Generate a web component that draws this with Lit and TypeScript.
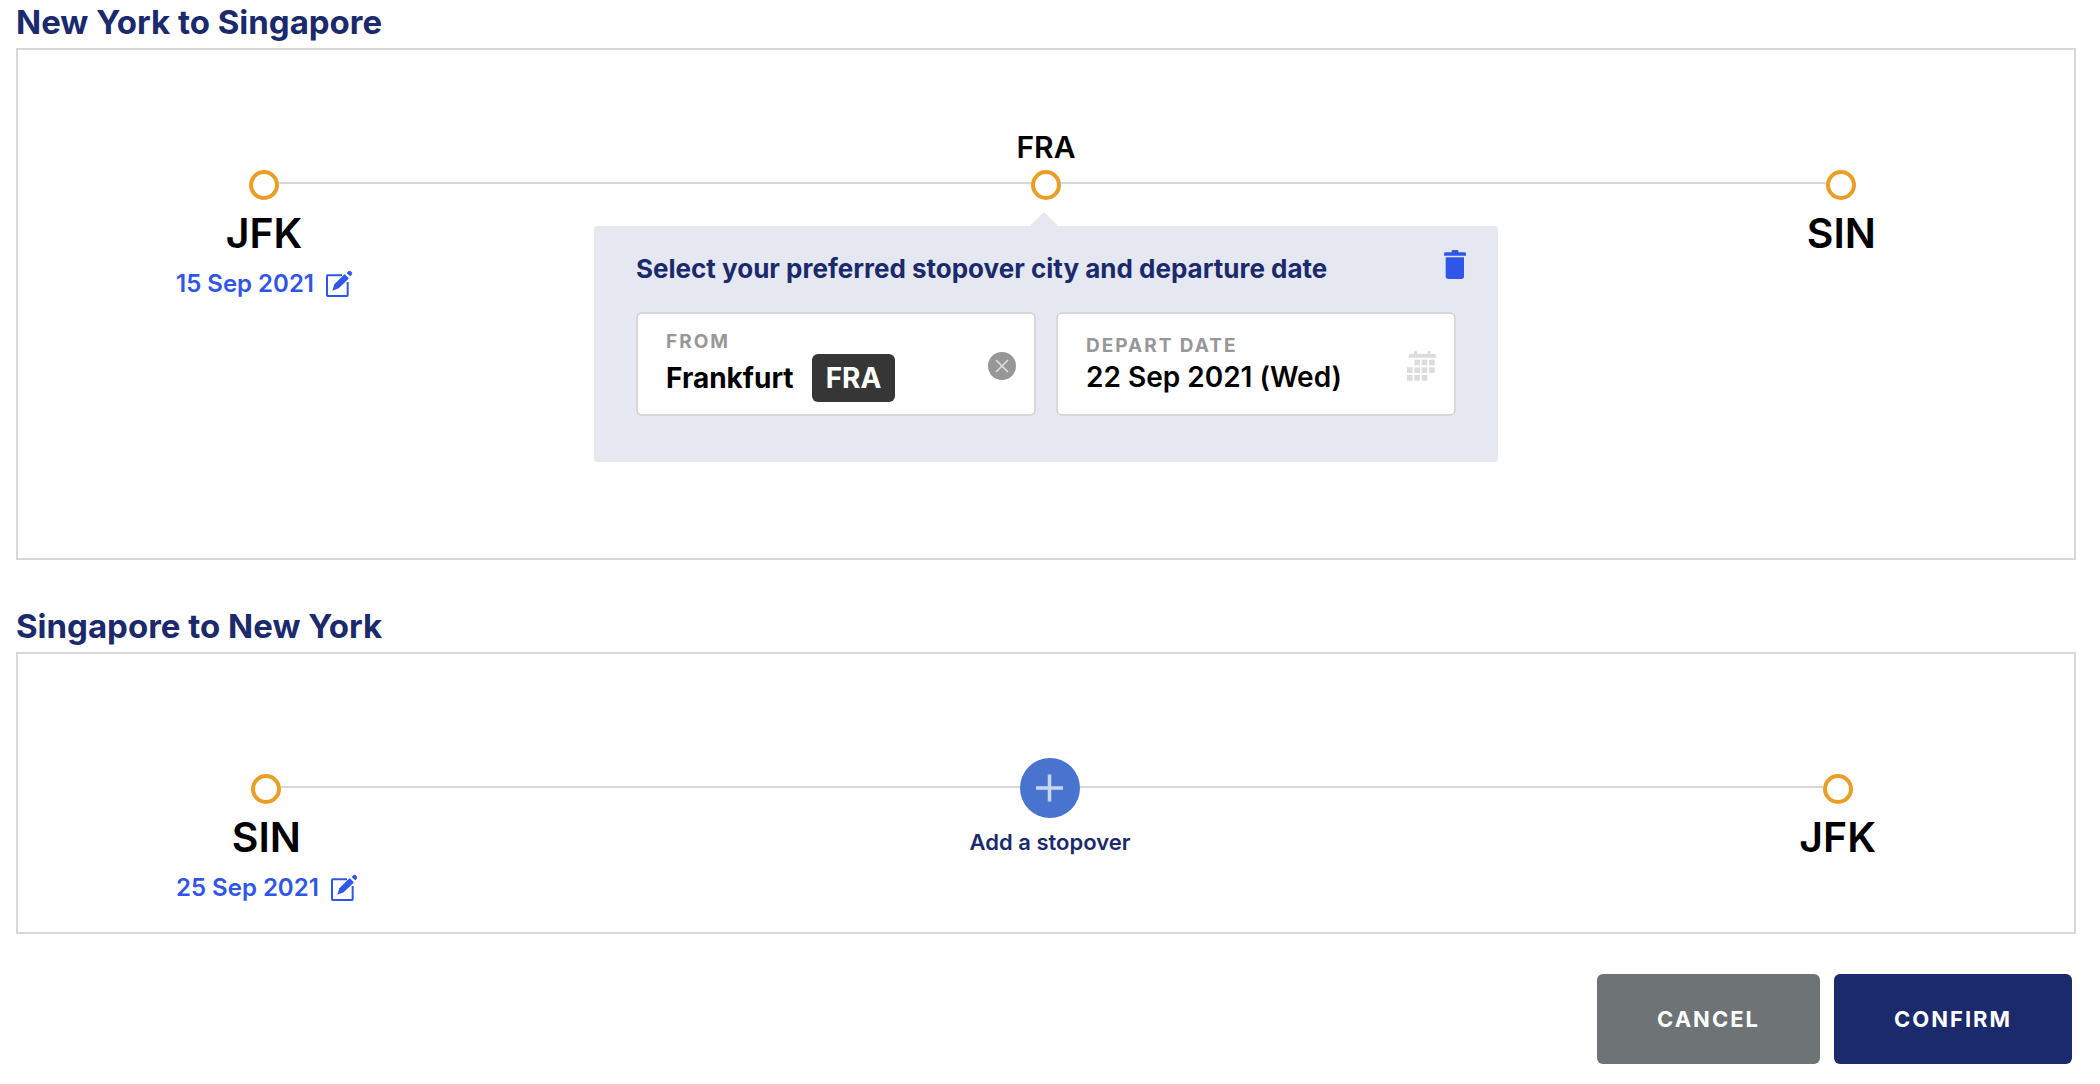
import { LitElement, html, css, svg, nothing } from "lit";
import { customElement, property } from "lit/decorators.js";

const editIcon = html`<svg class="edit-icon" viewBox="0 0 78 78" aria-hidden="true">
  ${svg`<path d="M48 13H5Q3 13 3 15V73Q3 75 5 75H63Q65 75 65 73V33" fill="none" stroke="currentColor" stroke-width="6"/>
  <path d="M19 59L25 40L54 11Q56 9 58 11L67 20Q69 22 67 24L38 52Z" fill="currentColor"/>
  <path d="M63 6Q69 -3 75 2Q81 8 73 15Z" fill="currentColor" stroke="currentColor" stroke-width="2"/>`}
</svg>`;

const trashIcon = html`<svg class="trash-icon" viewBox="0 0 66 87" aria-hidden="true">
  ${svg`<path d="M23 7V3Q23 0 26 0H40Q43 0 43 3V7H62Q66 7 66 11V17H0V11Q0 7 4 7Z" fill="#3056e8"/>
  <path d="M5 22H60V79Q60 87 52 87H13Q5 87 5 79Z" fill="#3056e8"/>`}
</svg>`;

const clearIcon = html`<svg class="clear-icon" viewBox="0 0 28 28" aria-hidden="true">
  ${svg`<circle cx="14" cy="14" r="14" fill="#979797"/>
  <path d="M8 8L20 20M20 8L8 20" stroke="#e2e2e2" stroke-width="1.500"/>`}
</svg>`;

const calendarCells = [
  [1, 0], [2, 0], [3, 0],
  [0, 1], [1, 1], [2, 1], [3, 1],
  [0, 2], [1, 2], [2, 2],
];

const calendarIcon = html`<svg class="calendar-icon" viewBox="0 0 87 90" aria-hidden="true">
  ${svg`<path d="M5 20V15Q5 9 11 9H21V4Q21 0 25.500 0Q30 0 30 4V9H62V4Q62 0 66.500 0Q71 0 71 4V9H81Q87 9 87 15V20Z" fill="#dcdcdc"/>
  ${calendarCells.map(([c, r]) => svg`<rect x=${c * 22} y=${26 + r * 23} width="17" height="17" fill="#dcdcdc"/>`)}`}
</svg>`;

const plusIcon = html`<svg class="plus-icon" viewBox="0 0 60 60" aria-hidden="true">
  ${svg`<circle cx="30" cy="30" r="30" fill="#4873cf"/>
  <path d="M16 30H43M29.500 16.500V43.500" stroke="#c9d6f1" stroke-width="3.500"/>`}
</svg>`;

interface Stopover {
  city: string;
  code: string;
  date: string;
}

@customElement("flight-leg")
export class FlightLeg extends LitElement {
  @property() heading = "";
  @property() from = "";
  @property() to = "";
  @property() date = "";
  @property({ attribute: false }) stopover?: Stopover;

  static styles = css`
    :host {
      display: block;
      color: #000;
    }
    button,
    input {
      font: inherit;
      color: inherit;
      background: none;
      border: 0;
      padding: 0;
      margin: 0;
    }
    button {
      cursor: pointer;
    }
    svg {
      display: block;
      overflow: visible;
    }
    .heading {
      margin: 0 0 4px;
      font-size: 33px;
      line-height: 44px;
      font-weight: 700;
      color: #1a2a6c;
    }
    .card {
      border: 2px solid #d8d8d8;
      padding: 80px 0 28px;
    }
    .card--stopover {
      padding-bottom: 96px;
    }
    .timeline {
      display: grid;
      grid-template-columns: 1fr auto 1fr;
      align-items: start;
    }
    .end {
      display: flex;
      padding-top: 40px;
    }
    .end--from {
      grid-area: 1 / 1;
      padding-left: 158px;
    }
    .end--to {
      grid-area: 1 / 3;
      padding-right: 198px;
    }
    .timeline--open {
      padding-left: 8px;
    }
    .timeline--open .end--from {
      padding-left: 150px;
    }
    .stop {
      display: flex;
      flex-direction: column;
      align-items: center;
    }
    .marker {
      align-self: stretch;
      display: flex;
      align-items: flex-start;
    }
    .line,
    .blank {
      flex: 1;
      height: 2px;
      margin-top: 12px;
    }
    .line {
      background: #d8d8d8;
    }
    .ring {
      box-sizing: border-box;
      width: 30px;
      height: 30px;
      border: 4px solid #e99f25;
      border-radius: 50%;
    }
    .code {
      margin-top: 8px;
      font-size: 41px;
      line-height: 50px;
      font-weight: 600;
    }
    .date {
      display: flex;
      align-items: center;
      gap: 12px;
      margin-top: 10px;
      font-size: 24px;
      line-height: 32px;
      font-weight: 600;
      color: #3056e8;
      white-space: nowrap;
    }
    .edit-icon {
      width: 26px;
      height: 26px;
    }
    .middle {
      grid-area: 1 / 2;
    }
    .via {
      margin-bottom: 6px;
      font-size: 30px;
      line-height: 34px;
      font-weight: 600;
    }
    .add {
      padding-top: 24px;
      font-size: 22px;
      line-height: 28px;
      font-weight: 600;
      color: #1a2a6c;
    }
    .add .line {
      margin-top: 28px;
    }
    .plus-icon {
      width: 60px;
      height: 60px;
    }
    .add-label {
      margin-top: 10px;
    }
    .popover {
      grid-area: 1 / 1 / 2 / -1;
      justify-self: center;
      position: relative;
      box-sizing: border-box;
      width: 904px;
      max-width: 100%;
      margin-top: 96px;
      padding: 24px 42px 46px;
      border-radius: 4px;
      background: #e5e8f0;
    }
    .popover::before {
      content: "";
      position: absolute;
      top: -14px;
      left: calc(50% - 16px);
      border: 14px solid transparent;
      border-top: 0;
      border-bottom-color: #e5e8f0;
    }
    .popover-head {
      display: flex;
      justify-content: space-between;
      align-items: flex-start;
      margin: 0 -10px 24px 0;
    }
    .popover-title {
      margin: 0;
      font-size: 26px;
      line-height: 38px;
      font-weight: 700;
      color: #1a2a6c;
    }
    .trash-icon {
      width: 22px;
      height: 29px;
    }
    .fields {
      display: grid;
      grid-template-columns: 1fr 1fr;
      gap: 20px;
    }
    .field {
      box-sizing: border-box;
      min-height: 104px;
      display: flex;
      align-items: center;
      padding: 0 18px 0 28px;
      border: 2px solid #d8d8d8;
      border-radius: 6px;
      background: #fff;
    }
    .field-body {
      flex: 1;
      min-width: 0;
      align-self: flex-start;
      display: flex;
      flex-direction: column;
      padding-top: 16px;
    }
    .field-body--date {
      padding-top: 20px;
    }
    .field-label {
      font-size: 19px;
      line-height: 24px;
      font-weight: 700;
      letter-spacing: 2px;
      color: #979797;
    }
    .field-value {
      display: flex;
      align-items: center;
      gap: 18px;
      font-size: 28px;
      line-height: 38px;
      font-weight: 700;
    }
    .field-value input {
      field-sizing: content;
      height: 38px;
    }
    .field-value--date {
      font-weight: 600;
    }
    .tag {
      padding: 0 14px;
      border-radius: 6px;
      line-height: 48px;
      background: #363636;
      color: #fff;
    }
    .field-action {
      margin-top: 4px;
    }
    .clear-icon {
      width: 28px;
      height: 28px;
    }
    .calendar-icon {
      width: 29px;
      height: 30px;
    }
  `;

  private renderStopover(s: Stopover) {
    return html`
      <div class="stop middle">
        <div class="via">${s.code}</div>
        <div class="marker">
          <span class="line"></span><span class="ring"></span><span class="line"></span>
        </div>
      </div>
      <form class="popover">
        <div class="popover-head">
          <h3 class="popover-title">Select your preferred stopover city and departure date</h3>
          <button type="button" aria-label="Remove stopover">${trashIcon}</button>
        </div>
        <div class="fields">
          <div class="field">
            <div class="field-body">
              <label class="field-label" for="city">FROM</label>
              <div class="field-value">
                <input id="city" type="text" .value=${s.city} />
                <span class="tag">${s.code}</span>
              </div>
            </div>
            <button class="field-action" type="button" aria-label="Clear city">${clearIcon}</button>
          </div>
          <div class="field">
            <div class="field-body field-body--date">
              <label class="field-label" for="depart">DEPART DATE</label>
              <div class="field-value field-value--date">
                <input id="depart" type="text" .value=${s.date} />
              </div>
            </div>
            <button class="field-action" type="button" aria-label="Open calendar">${calendarIcon}</button>
          </div>
        </div>
      </form>
    `;
  }

  private renderAdd() {
    return html`
      <button class="stop middle add" type="button">
        <span class="marker">
          <span class="line"></span>${plusIcon}<span class="line"></span>
        </span>
        <span class="add-label">Add a stopover</span>
      </button>
    `;
  }

  render() {
    const s = this.stopover;
    return html`
      <section>
        <h2 class="heading">${this.heading}</h2>
        <div class="card ${s ? "card--stopover" : ""}">
          <div class="timeline ${s ? "" : "timeline--open"}">
            <div class="end end--from">
              <div class="stop">
                <div class="marker">
                  <span class="blank"></span><span class="ring"></span><span class="line"></span>
                </div>
                <div class="code">${this.from}</div>
                ${this.date
                  ? html`<button class="date" type="button">${this.date}${editIcon}</button>`
                  : nothing}
              </div>
              <span class="line"></span>
            </div>
            <div class="end end--to">
              <span class="line"></span>
              <div class="stop">
                <div class="marker">
                  <span class="line"></span><span class="ring"></span><span class="blank"></span>
                </div>
                <div class="code">${this.to}</div>
              </div>
            </div>
            ${s ? this.renderStopover(s) : this.renderAdd()}
          </div>
        </div>
      </section>
    `;
  }
}

@customElement("app-root")
export class AppRoot extends LitElement {
  static styles = css`
    :host {
      display: block;
      background: #fff;
      font-family: "Proxima Nova", Inter, "Liberation Sans", sans-serif;
    }
    .legs {
      display: flex;
      flex-direction: column;
      gap: 44px;
      padding: 0 24px 40px 16px;
    }
    .actions {
      display: flex;
      justify-content: flex-end;
      gap: 14px;
      padding: 0 28px 20px;
    }
    .button {
      height: 90px;
      padding: 0 60px;
      border: 0;
      border-radius: 6px;
      font: inherit;
      font-size: 22px;
      font-weight: 700;
      letter-spacing: 2px;
      color: #fff;
      cursor: pointer;
    }
    .button--cancel {
      background: #6e7376;
    }
    .button--confirm {
      background: #1a2a6c;
    }
  `;

  private stopover: Stopover = { city: "Frankfurt", code: "FRA", date: "22 Sep 2021 (Wed)" };

  render() {
    return html`
      <main>
        <div class="legs">
          <flight-leg
            heading="New York to Singapore"
            from="JFK"
            to="SIN"
            date="15 Sep 2021"
            .stopover=${this.stopover}
          ></flight-leg>
          <flight-leg
            heading="Singapore to New York"
            from="SIN"
            to="JFK"
            date="25 Sep 2021"
          ></flight-leg>
        </div>
        <div class="actions">
          <button class="button button--cancel" type="button">CANCEL</button>
          <button class="button button--confirm" type="button">CONFIRM</button>
        </div>
      </main>
    `;
  }
}
